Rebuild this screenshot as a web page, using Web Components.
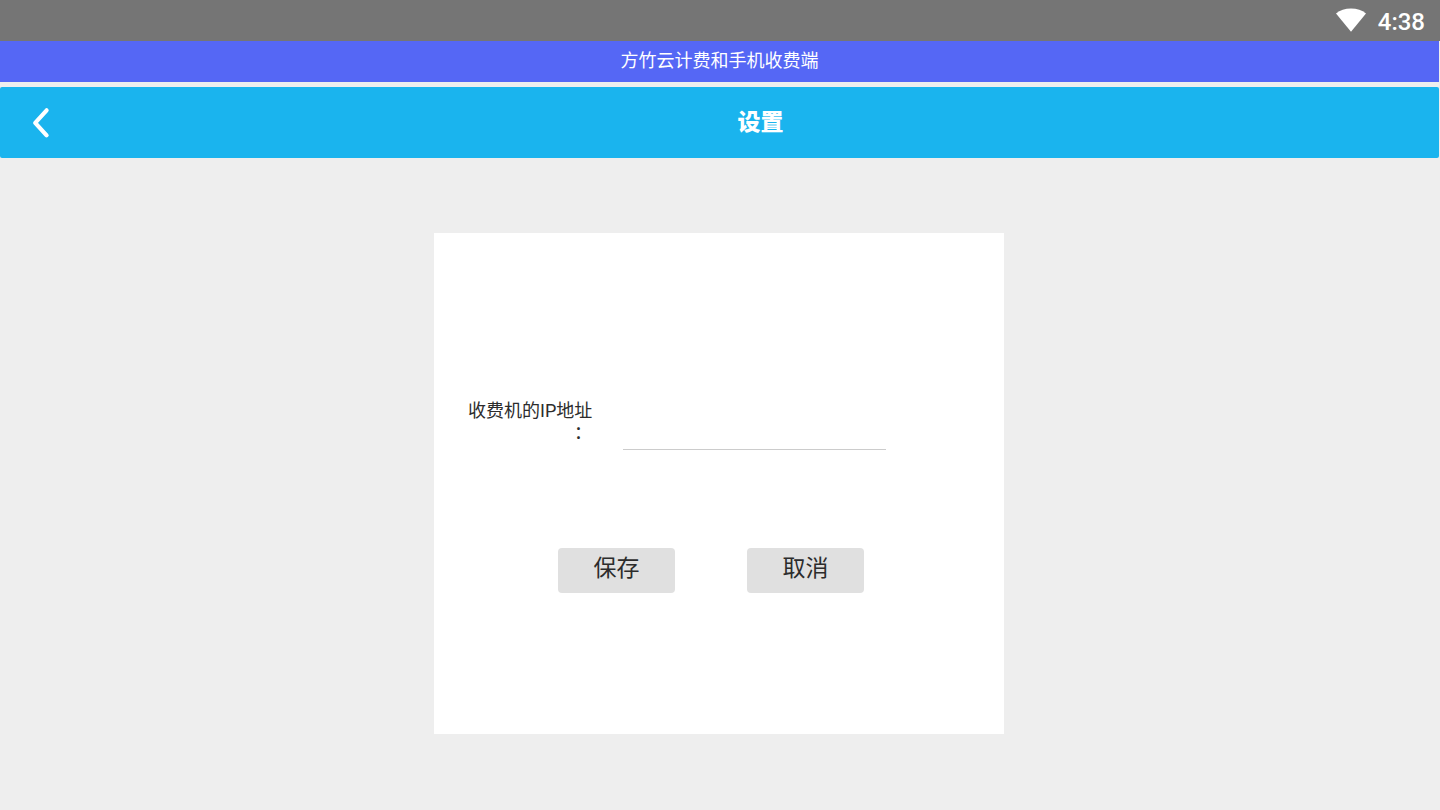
<!DOCTYPE html>
<html lang="zh-CN">
<head>
<meta charset="utf-8">
<meta name="viewport" content="width=device-width, initial-scale=1">
<title>设置</title>
<style>
html, body { height: 100%; margin: 0; }
body { background: #eee; font-family: Roboto, "Noto Sans CJK SC", sans-serif; }
</style>
</head>
<body>
<settings-app></settings-app>
<script>
function define(name, html, setup) {
  const template = document.createElement('template');
  template.innerHTML = html;
  customElements.define(name, class extends HTMLElement {
    constructor() {
      super();
      this.attachShadow({ mode: 'open' }).append(template.content.cloneNode(true));
      if (setup) setup(this.shadowRoot);
    }
  });
}

define('status-bar', `
<style>
:host { display: flex; justify-content: flex-end; align-items: center; gap: 12px; box-sizing: border-box; height: 41px; padding: 2px 15px 0 0; background: #757575; color: #fff; }
svg { display: block; margin-bottom: 4px; }
time { font-size: 24px; line-height: 28px; font-weight: 500; }
</style>
<svg width="30" height="24" viewBox="0 0 30 24" aria-hidden="true"><path fill="#fff" d="M0 5.500C4 2 9 .6 15 .6S26 2 30 5.500L15 23.800Z"/></svg>
<time><slot></slot></time>`);

define('app-banner', `
<style>
:host { display: block; height: 41px; margin-right: 1px; background: #5567f5; color: #fff; font-size: 18px; line-height: 40px; text-align: center; }
</style>
<slot></slot>`);

define('nav-header', `
<style>
:host { display: flex; align-items: center; height: 71px; margin: 5px 1px 0 0; border-radius: 2px; background: #1ab4ee; color: #fff; }
button { width: 82px; height: 71px; margin: 0; padding: 0; border: 0; background: none; color: inherit; }
svg { display: block; margin: 0 auto; }
h1 { flex: 1; margin: 0; font-size: 23px; line-height: 72px; font-weight: 900; text-align: center; }
</style>
<button type="button" aria-label="返回"><svg width="18" height="32" viewBox="0 0 18 32"><path d="M14.600 3.300L3.200 15.800L14.600 28.300" fill="none" stroke="#fff" stroke-width="4.200" stroke-linecap="round" stroke-linejoin="round"/></svg></button>
<h1><slot></slot></h1>`);

define('text-field', `
<style>
:host { display: flex; align-items: flex-start; color: #2c2c2c; }
label { width: 124px; font-size: 18px; line-height: 22px; text-align: right; white-space: nowrap; }
label span { display: block; }
input { box-sizing: border-box; width: 263px; height: 50px; margin: 0 0 0 31px; padding: 0 4px; border: 0; border-bottom: 1px solid #ccc; border-radius: 0; outline: 0; background: transparent; color: inherit; font: inherit; font-size: 18px; }
</style>
<label for="field"><slot></slot><span>：</span></label>
<input id="field" type="text">`);

define('action-button', `
<style>
:host { display: block; }
button { display: block; width: 117px; height: 45px; margin: 0; padding: 0 0 4px; border: 0; border-radius: 4px; background: #e0e0e0; color: #2c2c2c; font: inherit; font-size: 23px; line-height: 40px; }
</style>
<button type="button"><slot></slot></button>`);

define('settings-card', `
<style>
:host { display: block; box-sizing: border-box; width: 570px; max-width: 100%; min-height: 501px; padding: 167px 34px 34px; background: #fff; }
form { margin: 0; }
.actions { display: flex; gap: 72px; margin: 98px 0 0 90px; }
</style>
<form>
<text-field>收费机的IP地址</text-field>
<div class="actions"><action-button>保存</action-button><action-button>取消</action-button></div>
</form>`);

define('settings-app', `
<style>
:host { display: flex; flex-direction: column; min-height: 100%; }
main { display: flex; justify-content: center; padding: 75px 2px 0 0; }
</style>
<status-bar>4:38</status-bar>
<app-banner>方竹云计费和手机收费端</app-banner>
<nav-header>设置</nav-header>
<main><settings-card></settings-card></main>`);
</script>
</body>
</html>
